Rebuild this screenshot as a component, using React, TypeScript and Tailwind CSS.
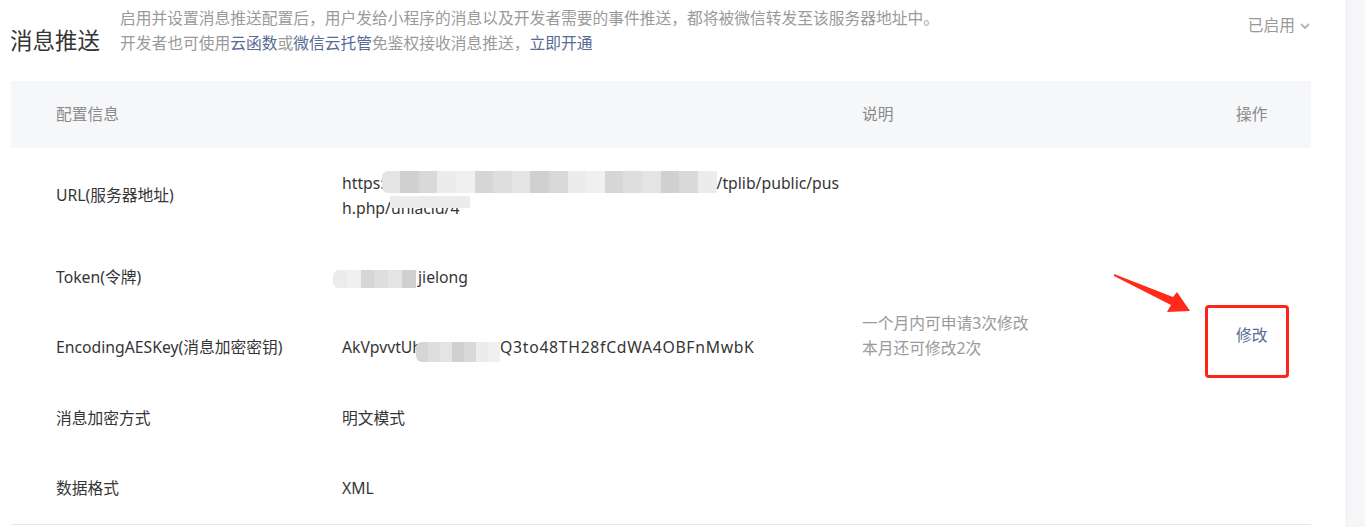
// WeChat mini-program "消息推送" settings panel (static mock).
const font = "font-['Noto_Sans','Noto_Sans_CJK_SC',sans-serif]";

const shades = ["bg-[#e4e4e4]", "bg-[#d6d6d6]", "bg-[#ececec]", "bg-[#d0d0d0]", "bg-[#dedede]", "bg-[#f0f0f0]", "bg-[#d9d9d9]"];

function Mosaic({ width, height, cells, seed = 0 }: { width: number; height: number; cells: number; seed?: number }) {
  return (
    <span className="inline-flex align-middle overflow-hidden rounded-l-[6px]" style={{ width, height }}>
      {Array.from({ length: cells }).map((_, i) => (
        <span key={i} className={`flex-1 h-full ${shades[(i * 3 + seed) % shades.length]}`} />
      ))}
    </span>
  );
}

export default function App() {
  return (
    <div className={`relative w-[1365px] h-[527px] overflow-hidden bg-white flex ${font}`}>
      <div className="w-[1346px]">
        {/* page heading */}
        <div className="flex items-start pl-[10px] pr-[35px] pt-[6px]">
          <h2 className="mt-[20px] text-[22.5px] leading-[30px] text-[#353535] font-normal">消息推送</h2>
          <div className="ml-[20px] text-[15.75px] leading-[25px] text-[#9a9a9a]">
            <p>启用并设置消息推送配置后，用户发给小程序的消息以及开发者需要的事件推送，都将被微信转发至该服务器地址中。</p>
            <p>
              开发者也可使用<a className="text-[#576b95]">云函数</a>或<a className="text-[#576b95]">微信云托管</a>免鉴权接收消息推送，<a className="text-[#576b95]">立即开通</a>
            </p>
          </div>
          <div className="ml-auto mt-[8px] flex items-center gap-[4px] text-[15.75px] text-[#9a9a9a]">
            已启用
            <svg className="w-[12px] h-[12px]" viewBox="0 0 12 12" fill="none" stroke="#b5b5b5" strokeWidth="1.8" strokeLinecap="round" strokeLinejoin="round">
              <path d="M2.5 4.5L6 8l3.5-3.5" />
            </svg>
          </div>
        </div>

        {/* table */}
        <div className="ml-[11px] mt-[25px] w-[1300px] text-[15.75px]">
          <div className="grid grid-cols-[331px_520px_374px_75px] h-[67px] bg-[#f6f7f9] text-[#8a8a8a]">
            <div className="flex items-center pl-[45px]">配置信息</div>
            <div />
            <div className="flex items-center">说明</div>
            <div className="flex items-center">操作</div>
          </div>

          <div className="grid grid-cols-[331px_520px_374px_75px] grid-rows-[95px_70px_70px_71px_70px] border-b border-[#e7e7eb] text-[#353535]">
            <div className="col-start-1 row-start-1 flex items-center pl-[45px]">URL(服务器地址)</div>
            <div className="col-start-2 row-start-1 flex flex-col justify-center leading-[25px]">
              <div className="flex items-center">
                https:
                <span className="-ml-[3px] -mt-[4px]"><Mosaic width={335} height={22} cells={18} /></span>
                /tplib/public/pus
              </div>
              <div className="flex items-center">
                h.php/
                <span className="relative">
                  uniacid/4
                  <span className="absolute left-[-1px] top-0 w-[80px] h-[12px] bg-[#ececec]" />
                </span>
              </div>
            </div>

            <div className="col-start-1 row-start-2 flex items-center pl-[45px]">Token(令牌)</div>
            <div className="col-start-2 row-start-2 flex items-center">
              <span className="-ml-[9px] mr-[2px]"><Mosaic width={83} height={18} cells={6} seed={2} /></span>
              jielong
            </div>

            <div className="col-start-1 row-start-3 flex items-center pl-[45px]">EncodingAESKey(消息加密密钥)</div>
            <div className="col-start-2 row-start-3 flex items-center">
              AkVpvvtUh
              <span className="-ml-[6px] mt-[6px]"><Mosaic width={84} height={20} cells={7} seed={1} /></span>
              <span className="tracking-[0.7px]">Q3to48TH28fCdWA4OBFnMwbK</span>
            </div>

            <div className="col-start-1 row-start-4 flex items-center pl-[45px]">消息加密方式</div>
            <div className="col-start-2 row-start-4 flex items-center">明文模式</div>

            <div className="col-start-1 row-start-5 flex items-center pl-[45px]">数据格式</div>
            <div className="col-start-2 row-start-5 flex items-center">XML</div>

            <div className="col-start-3 row-start-1 row-span-5 self-center leading-[25px] text-[#9a9a9a]">
              <p>一个月内可申请3次修改</p>
              <p>本月还可修改2次</p>
            </div>
            <div className="col-start-4 row-start-1 row-span-5 self-center text-[#576b95]">修改</div>
          </div>
        </div>
      </div>

      {/* scrollbar gutter */}
      <div className="flex-1 bg-[#f5f6f8] border-l border-[#ececef]" />

      {/* red annotation over the page */}
      <svg className="absolute left-0 top-0 pointer-events-none" width="1365" height="527">
        <path d="M1114 274 L1173 297 L1177 292 L1190 311 L1167 312 L1171 305 L1114 276 Z" fill="#ff2a1a" />
      </svg>
      <div className="absolute left-[1205px] top-[305px] w-[84px] h-[73px] border-[3px] border-[#ff2418] rounded-[4px]" />
    </div>
  );
}
